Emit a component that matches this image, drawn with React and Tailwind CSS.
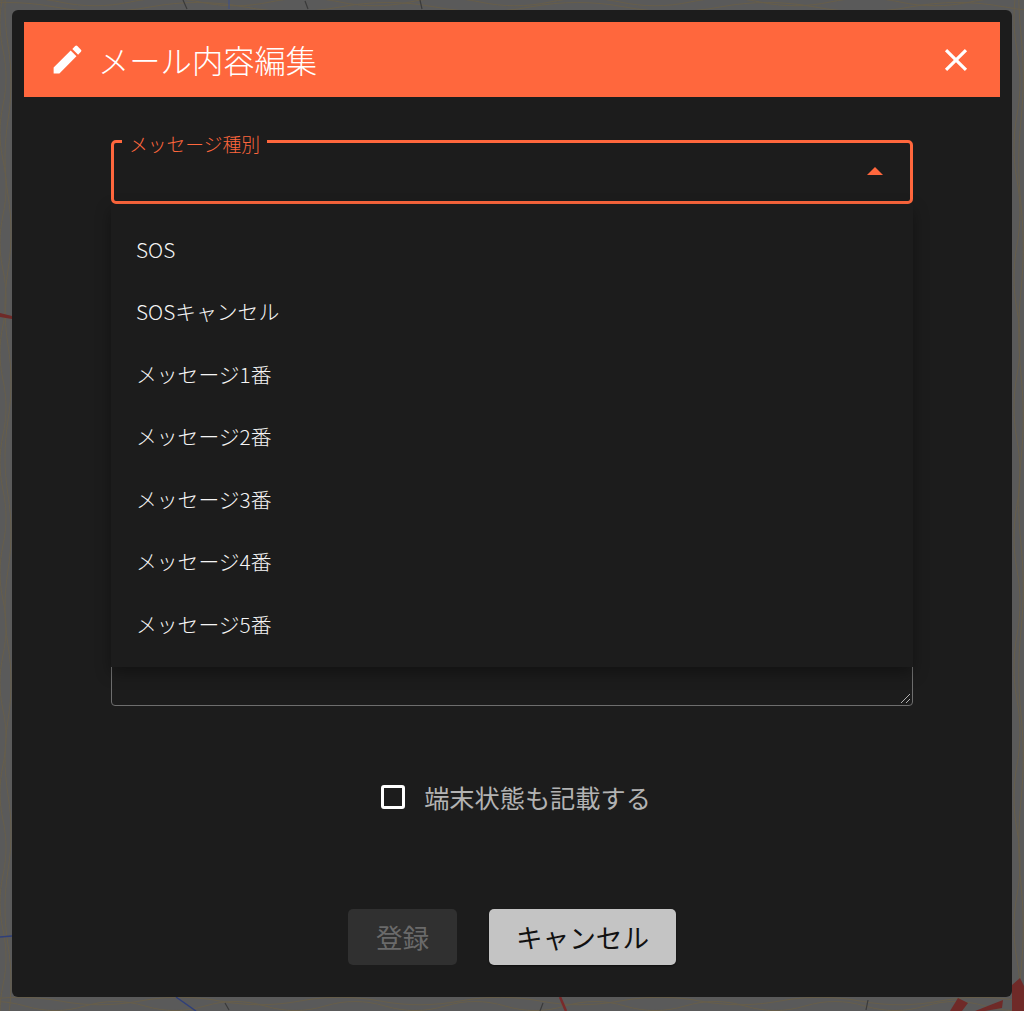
const options = [
  "SOS",
  "SOSキャンセル",
  "メッセージ1番",
  "メッセージ2番",
  "メッセージ3番",
  "メッセージ4番",
  "メッセージ5番",
];

// Contour lines of the map: only the strips round the dialog are ever visible
const hWave = (y, step, amp, shift) => {
  let d = `M${-shift} ${y}`;
  for (let x = -shift; x < 1024; x += step) {
    const up = Math.round((x + shift) / step) % 2 === 0 ? -amp : amp;
    d += `C${x + step / 3} ${y + up} ${x + (step * 2) / 3} ${y + up} ${x + step} ${y}`;
  }
  return d;
};

const vWave = (x, step, amp, shift) => {
  let d = `M${x} ${-shift}`;
  for (let y = -shift; y < 1011; y += step) {
    const up = Math.round((y + shift) / step) % 2 === 0 ? -amp : amp;
    d += `C${x + up} ${y + step / 3} ${x + up} ${y + (step * 2) / 3} ${x} ${y + step}`;
  }
  return d;
};

const contours = [
  hWave(2, 70, 5, 10),
  hWave(7, 95, 6, 40),
  hWave(1001, 80, 5, 20),
  hWave(1006, 60, 6, 35),
  vWave(3, 55, 4, 5),
  vWave(8, 75, 4, 30),
  vWave(1017, 65, 4, 15),
  vWave(1021, 85, 3, 50),
];

// Dimmed topographic map behind the dialog
const MapBackdrop = () => (
  <svg className="absolute inset-0 w-full h-full" viewBox="0 0 1024 1011" fill="none">
    <rect width="1024" height="1011" fill="#5a5a5a" />
    <g stroke="#675e4a" strokeWidth="1">
      {contours.map((d, i) => (
        <path key={i} d={d} />
      ))}
    </g>
    <g stroke="#3a3a3a" strokeWidth="1.2">
      <path d="M183 0L187 9M305 1L308 9M420 0L422 9M225 1003L229 1010M543 1003L540 1011M868 1000L866 1010" />
    </g>
    <path d="M229 0L229 9" stroke="#3d4f88" strokeWidth="1" />
    <path d="M0 937L12 936M176 997L196 1011" stroke="#2f3f7a" strokeWidth="1.5" />
    <path d="M560 997L566 1011" stroke="#7a2a2a" strokeWidth="2.5" />
    <g fill="#6f2a28">
      <path d="M950 1011L958 998 968 1003 962 1011Z" />
      <path d="M975 1011L1003 1000 1002 1008 985 1011Z" />
      <path d="M1012 985L1020 978 1024 986 1024 1011 1012 1011Z" />
      <path d="M0 313L12 316 12 319 0 317Z" />
    </g>
  </svg>
);

export default function App() {
  return (
    <div
      className="relative w-[1024px] h-[1011px] overflow-hidden antialiased"
      style={{ fontFamily: '"Noto Sans CJK JP", "Noto Sans", sans-serif' }}
    >
      <MapBackdrop />

      <div className="absolute left-[12px] top-[10px] w-[1000px] h-[987px] rounded-[6px] bg-[#1c1c1c] p-[12px] flex flex-col">
        {/* Header */}
        <div className="h-[75px] bg-[#ff673d] flex items-center justify-between pl-[25px] pr-[25px] text-white">
          <div className="flex items-center gap-[12px]">
            <svg width="37" height="37" viewBox="0 0 24 24" fill="white">
              <path d="M3 17.25V21h3.75L17.81 9.94l-3.75-3.75L3 17.25zM20.71 7.04a.996.996 0 0 0 0-1.41l-2.34-2.34a.996.996 0 0 0-1.41 0l-1.83 1.83 3.75 3.75 1.83-1.83z" />
            </svg>
            <span className="text-[31.3px] leading-none font-light">メール内容編集</span>
          </div>
          <svg width="38" height="38" viewBox="0 0 24 24" fill="white">
            <path d="M19 6.41L17.59 5 12 10.59 6.41 5 5 6.41 10.59 12 5 17.59 6.41 19 12 13.41 17.59 19 19 17.59 13.41 12z" />
          </svg>
        </div>

        {/* Form */}
        <div className="relative flex flex-col items-center flex-1">
          <div className="relative w-[802px] h-[64px] mt-[43px] rounded-[5px] border-[3px] border-[#ff673d]">
            <span className="absolute left-[8px] top-[-10px] px-[7px] bg-[#1c1c1c] text-[#ff673d] text-[18.8px] leading-[22px] font-light whitespace-nowrap">
              メッセージ種別
            </span>
            <svg className="absolute right-[27px] top-[24px]" width="16" height="8" viewBox="0 0 16 8" fill="#ff673d">
              <path d="M8 0l8 8H0z" />
            </svg>
          </div>

          <div className="w-[802px] h-[105px] mt-[397px] rounded-[4px] border border-[#6e6e6e] relative">
            <svg className="absolute right-[1px] bottom-[1px]" width="11" height="11" viewBox="0 0 11 11" stroke="#b0b0b0" strokeWidth="1">
              <path d="M1 10L10 1M6 10L10 6" />
            </svg>
          </div>

          <div className="flex items-center h-[24px] mt-[79px] ml-[8px] text-[25.2px] leading-none text-[#b3b3b3]">
            <span className="w-[24px] h-[24px] rounded-[3px] border-[3px] border-white mr-[19px]" />
            <span className="pt-[2px]">端末状態も記載する</span>
          </div>

          <div className="flex items-start gap-[32px] mt-[100px]">
            <button className="w-[109px] h-[56px] rounded-[5px] bg-[#303030] text-[#6a6a6a] text-[26.6px]">
              登録
            </button>
            <button className="w-[187px] h-[56px] rounded-[5px] bg-[#c4c4c4] text-[#111111] text-[26.6px] shadow-[0_1px_2px_rgba(0,0,0,0.5)]">
              キャンセル
            </button>
          </div>

          {/* Open dropdown menu */}
          <ul className="absolute left-[87px] top-[107px] w-[802px] h-[463px] pt-[14px] bg-[#1c1c1c] shadow-[0_6px_14px_rgba(0,0,0,0.35)] text-[20.8px] font-light text-[#f5f5f5]">
            {options.map((option) => (
              <li key={option} className="h-[62.5px] pl-[25px] flex items-center">
                {option}
              </li>
            ))}
          </ul>
        </div>
      </div>
    </div>
  );
}
